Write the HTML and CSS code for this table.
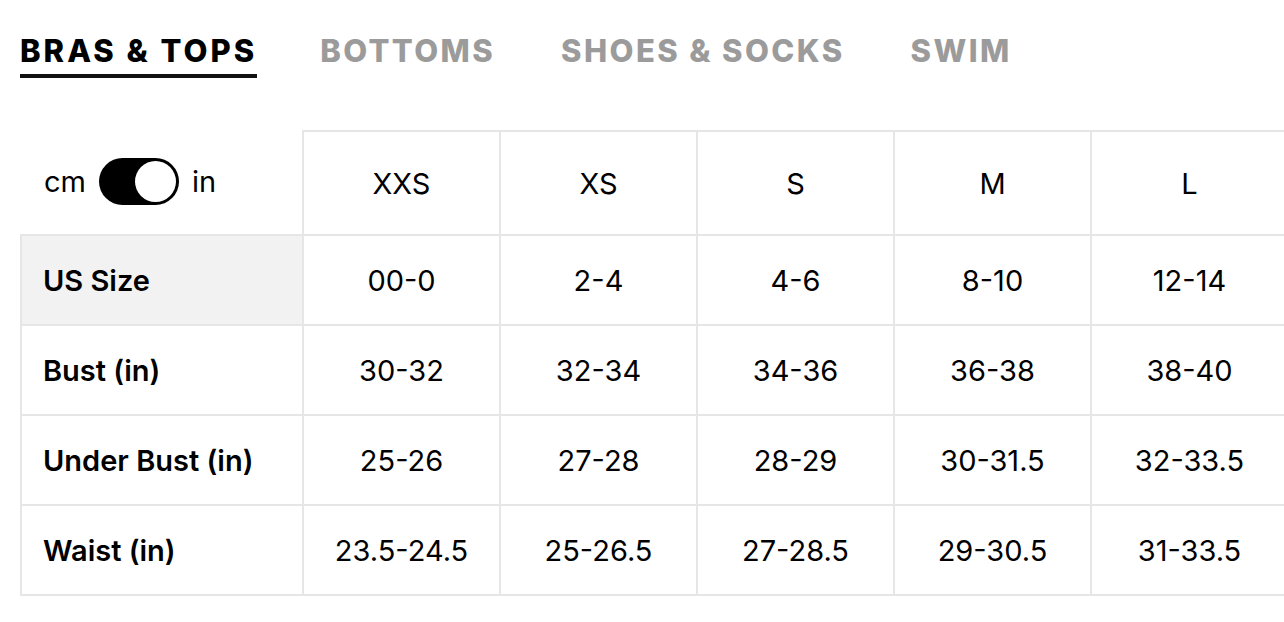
FILE: index.html
```html
<!DOCTYPE html>
<html lang="en">
<head>
<meta charset="utf-8">
<title>Size Guide</title>
<link rel="stylesheet" href="styles.css">
</head>
<body>
<nav class="tabs">
  <a class="tab active">BRAS &amp; TOPS</a>
  <a class="tab">BOTTOMS</a>
  <a class="tab">SHOES &amp; SOCKS</a>
  <a class="tab">SWIM</a>
</nav>
<table class="chart">
  <thead>
    <tr>
      <th class="corner">
        <div class="units">
          <span>cm</span>
          <span class="toggle"><span class="knob"></span></span>
          <span>in</span>
        </div>
      </th>
      <th>XXS</th><th>XS</th><th>S</th><th>M</th><th>L</th>
    </tr>
  </thead>
  <tbody>
    <tr class="shaded">
      <th>US Size</th><td>00-0</td><td>2-4</td><td>4-6</td><td>8-10</td><td>12-14</td>
    </tr>
    <tr>
      <th>Bust (in)</th><td>30-32</td><td>32-34</td><td>34-36</td><td>36-38</td><td>38-40</td>
    </tr>
    <tr>
      <th>Under Bust (in)</th><td>25-26</td><td>27-28</td><td>28-29</td><td>30-31.5</td><td>32-33.5</td>
    </tr>
    <tr>
      <th>Waist (in)</th><td>23.5-24.5</td><td>25-26.5</td><td>27-28.5</td><td>29-30.5</td><td>31-33.5</td>
    </tr>
  </tbody>
</table>
</body>
</html>
```
FILE: styles.css
```css
html, body {
  margin: 0;
  padding: 0;
  background: #fff;
  overflow: hidden;
}
body {
  width: 1284px;
  height: 622px;
  font-family: Inter, "Noto Sans", sans-serif;
  color: #000;
}
.tabs {
  display: flex;
  gap: 66px;
  padding: 33px 0 0 20px;
  height: 130px;
  box-sizing: border-box;
}
.tab {
  font-family: Inter, sans-serif;
  font-weight: 800;
  font-size: 31px;
  letter-spacing: 2.4px;
  color: #9b9b9b;
  line-height: 36px;
  height: 45px;
  box-sizing: border-box;
  white-space: nowrap;
}
.tab.active {
  color: #000;
  letter-spacing: 3px;
  border-bottom: 4px solid #111;
  margin-right: -3px;
}
.chart {
  margin-left: 20px;
  border-collapse: collapse;
  table-layout: fixed;
  width: 1266px;
}
.chart th, .chart td {
  border: 2px solid #e6e6e6;
  text-align: center;
  font-size: 29px;
  font-weight: 400;
  padding: 0;
}
.chart thead th {
  height: 102px;
  width: 195px;
}
.chart thead th.corner {
  width: 280px;
  border-top-color: transparent;
  border-left-color: transparent;
  text-align: left;
}
.chart tbody th, .chart tbody td {
  height: 88px;
}
.chart tbody th {
  text-align: left;
  font-weight: 600;
  font-size: 29px;
  padding-left: 21px;
}
.shaded th {
  background: #f2f2f2;
}
.units {
  display: flex;
  align-items: center;
  gap: 13px;
  padding-left: 22px;
  padding-bottom: 4px;
  font-size: 29px;
}
.toggle {
  display: flex;
  justify-content: flex-end;
  width: 80px;
  height: 47px;
  border-radius: 24px;
  background: #000;
  box-sizing: border-box;
  padding: 3px;
}
.knob {
  width: 41px;
  height: 41px;
  border-radius: 50%;
  background: #fff;
}
```
